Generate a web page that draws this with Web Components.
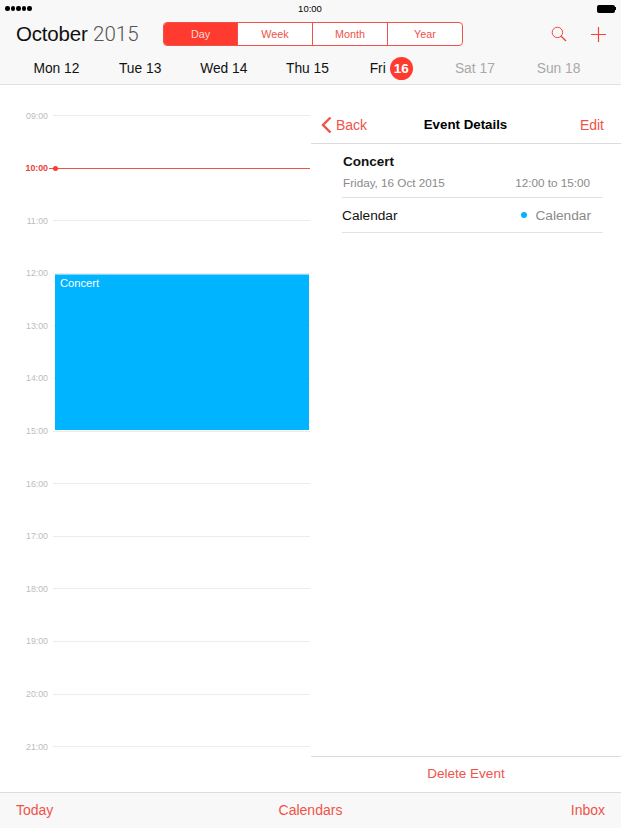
<!DOCTYPE html>
<html>
<head>
<meta charset="utf-8">
<style>
  html, body { margin: 0; height: 100%; background: #fff; }
  body { font-family: "Liberation Sans", Arial, sans-serif; }
</style>
</head>
<body>
<cal-app>
  <cal-header></cal-header>
  <day-timeline slot="left"></day-timeline>
  <event-details slot="right"></event-details>
  <cal-toolbar slot="footer"></cal-toolbar>
</cal-app>

<script>
class CalApp extends HTMLElement {
  constructor() {
    super();
    this.attachShadow({ mode: "open" });
    this.shadowRoot.innerHTML = `
      <style>
        :host { display: flex; flex-direction: column; width: 621px; height: 828px; overflow: hidden; }
        #body { flex: 1; display: flex; min-height: 0; }
        ::slotted([slot=left]) { width: 311px; flex: none; }
        ::slotted([slot=right]) { flex: 1; }
      </style>
      <slot></slot>
      <div id="body">
        <slot name="left"></slot>
        <slot name="right"></slot>
      </div>
      <slot name="footer"></slot>
    `;
  }
}

class CalHeader extends HTMLElement {
  constructor() {
    super();
    this.attachShadow({ mode: "open" });
    this.shadowRoot.innerHTML = `
      <style>
        :host { display: block; height: 85px; box-sizing: border-box; background: #f8f8f8; border-bottom: 1px solid #e2e2e2; color: #000; }
        #status { height: 17px; display: grid; grid-template-columns: 1fr auto 1fr; align-items: center; padding: 0 5px 0 5px; font-size: 9.5px; }
        #status > div:nth-child(2) { margin-right: 1px; }
        #dots { display: flex; gap: 1px; }
        #dots i { width: 4.5px; height: 4.5px; border-radius: 50%; background: #000; }
        #batt { justify-self: end; display: flex; align-items: center; }
        #batt b { width: 18px; height: 8px; border-radius: 2px; background: #000; }
        #batt i { width: 1.5px; height: 3px; background: #000; }
        #top { height: 34px; display: flex; align-items: center; padding-left: 16px; }
        h1 { margin: 0; width: 147px; font-size: 20.5px; font-weight: 400; letter-spacing: -0.2px; white-space: nowrap; color: #111; }
        h1 span { color: #555; font-family: Roboto, sans-serif; font-weight: 300; letter-spacing: 0; font-size: 20.5px; }
        #seg { display: grid; grid-template-columns: 73px 75px 75px 1fr; width: 300px; height: 24px; box-sizing: border-box; border: 1px solid #f0524a; border-radius: 4px; overflow: hidden; font-size: 10.8px; color: #f0524a; background: #fff; }
        #seg div { display: flex; align-items: center; justify-content: center; border-left: 1px solid #f0524a; }
        #seg div:first-child { border-left: 0; background: #ff3b30; color: #ffd9d6; }
        #icons { margin-left: auto; display: flex; gap: 24px; padding-right: 15px; align-items: center; color: #f0463c; }
        #days { height: 33px; display: grid; grid-template-columns: repeat(7, 83.7px); padding: 1px 0 0 14.6px; box-sizing: border-box; align-items: center; font-size: 13.8px; color: #111; }
        #days span { display: flex; align-items: center; justify-content: center; gap: 4px; white-space: nowrap; }
        #days .off { color: #a8a8a8; }
        #days em { font-style: normal; width: 23px; height: 23px; border-radius: 50%; background: #ff3b30; color: #fff; font-weight: 700; font-size: 13.5px; display: flex; align-items: center; justify-content: center; }
      </style>
      <div id="status">
        <div id="dots"><i></i><i></i><i></i><i></i><i></i></div>
        <div>10:00</div>
        <div id="batt"><b></b><i></i></div>
      </div>
      <div id="top">
        <h1>October <span>2015</span></h1>
        <div id="seg"><div>Day</div><div>Week</div><div>Month</div><div>Year</div></div>
        <div id="icons">
          <svg width="16" height="16" viewBox="0 0 16 16" fill="none" stroke="currentColor"><circle cx="6.4" cy="6.4" r="5.2"/><path d="M10.2 10.2 15 15" stroke-width="1.4"/></svg>
          <svg width="15" height="15" viewBox="0 0 15 15" fill="none" stroke="currentColor" stroke-width="1.2"><path d="M7.5 0v15M0 7.5h15"/></svg>
        </div>
      </div>
      <div id="days">
        <span>Mon 12</span><span>Tue 13</span><span>Wed 14</span><span>Thu 15</span>
        <span>Fri <em>16</em></span><span class="off">Sat 17</span><span class="off">Sun 18</span>
      </div>
    `;
  }
}

class HourRow extends HTMLElement {
  constructor() {
    super();
    this.attachShadow({ mode: "open" });
    this.shadowRoot.innerHTML = `
      <style>
        :host { display: flex; align-items: center; height: 0; position: relative; color: #bcbcbc; font-size: 8.8px; }
        :host([now]) { color: #e8423a; font-weight: 700; }
        #label { width: 48px; text-align: right; flex: none; }
        #line { flex: 1; height: 1px; margin-left: 5px; background: #ececec; }
        :host([now]) #line { background: #f0524a; margin-left: 1px; }
        :host([now]) #dot { position: absolute; left: 53px; top: -2.5px; width: 5px; height: 5px; border-radius: 50%; background: #ff3b30; }
      </style>
      <div id="label"><slot></slot></div><div id="dot"></div><div id="line"></div>
    `;
  }
}

class DayTimeline extends HTMLElement {
  constructor() {
    super();
    this.attachShadow({ mode: "open" });
    const hours = [9, 10, 11, 12, 13, 14, 15, 16, 17, 18, 19, 20, 21];
    const rows = hours.map(h => {
      const label = String(h).padStart(2, "0") + ":00";
      return `<hour-row ${h === 10 ? "now" : ""}>${label}</hour-row>`;
    }).join("");
    this.shadowRoot.innerHTML = `
      <style>
        :host { display: block; position: relative; box-sizing: border-box; padding: 30.5px 1px 0 0; }
        #hours { display: flex; flex-direction: column; gap: 52.6px; }
        #event { position: absolute; left: 55px; width: 254px; top: 189px; height: 156px; box-sizing: border-box; background: #00b4ff; border-top: 1px solid #7fd9ff; color: #fff; font-size: 11.2px; padding: 2px 5px; }
      </style>
      <div id="hours">${rows}</div>
      <div id="event">Concert</div>
    `;
  }
}

class EventDetails extends HTMLElement {
  constructor() {
    super();
    this.attachShadow({ mode: "open" });
    this.shadowRoot.innerHTML = `
      <style>
        :host { display: flex; flex-direction: column; background: #fff; }
        #nav { margin-top: 19px; height: 40px; box-sizing: border-box; border-bottom: 1px solid #dcdcdc; display: grid; grid-template-columns: 1fr auto 1fr; align-items: center; padding: 2px 11px 0 10px; font-size: 14px; color: #f0524a; }
        #nav a { display: flex; align-items: center; gap: 4px; }
        #nav b { color: #000; font-size: 13.3px; }
        #nav span { justify-self: end; margin-right: 6px; }
        #content { flex: 1; padding-left: 31px; padding-right: 18px; }
        #title { padding: 10px 0 0 1px; font-size: 13.5px; font-weight: 700; color: #111; }
        #when { display: flex; justify-content: space-between; height: 29px; box-sizing: border-box; padding: 7px 13px 0 1px; font-size: 11.7px; color: #8a8a8a; border-bottom: 1px solid #e2e2e2; }
        #cal { display: flex; align-items: center; justify-content: space-between; height: 35px; box-sizing: border-box; padding-right: 12px; border-bottom: 1px solid #e2e2e2; font-size: 13.7px; color: #111; }
        #cal div { display: flex; align-items: center; gap: 8px; color: #8a8a8a; }
        #cal i { width: 6px; height: 6px; border-radius: 50%; background: #00b4ff; }
        #delete { height: 36px; box-sizing: border-box; border-top: 1px solid #dcdcdc; padding-bottom: 2px; display: flex; align-items: center; justify-content: center; font-size: 13.5px; color: #f0524a; }
      </style>
      <div id="nav">
        <a><svg width="11" height="18" viewBox="0 0 11 18" fill="none" stroke="currentColor" stroke-width="2.4"><path d="M9.5 1.5 2 9l7.5 7.5"/></svg>Back</a>
        <b>Event Details</b>
        <span>Edit</span>
      </div>
      <div id="content">
        <div id="title">Concert</div>
        <div id="when"><span>Friday, 16 Oct 2015</span><span>12:00 to 15:00</span></div>
        <div id="cal">Calendar<div><i></i>Calendar</div></div>
      </div>
      <div id="delete">Delete Event</div>
    `;
  }
}

class CalToolbar extends HTMLElement {
  constructor() {
    super();
    this.attachShadow({ mode: "open" });
    this.shadowRoot.innerHTML = `
      <style>
        :host { display: grid; grid-template-columns: 1fr auto 1fr; align-items: center; height: 36px; box-sizing: border-box; padding: 0 16px 2px; background: #f8f8f8; border-top: 1px solid #dcdcdc; color: #f0524a; font-size: 14px; }
        span:last-child { justify-self: end; }
      </style>
      <span>Today</span><span>Calendars</span><span>Inbox</span>
    `;
  }
}

customElements.define("hour-row", HourRow);
customElements.define("cal-header", CalHeader);
customElements.define("day-timeline", DayTimeline);
customElements.define("event-details", EventDetails);
customElements.define("cal-toolbar", CalToolbar);
customElements.define("cal-app", CalApp);
</script>
</body>
</html>
